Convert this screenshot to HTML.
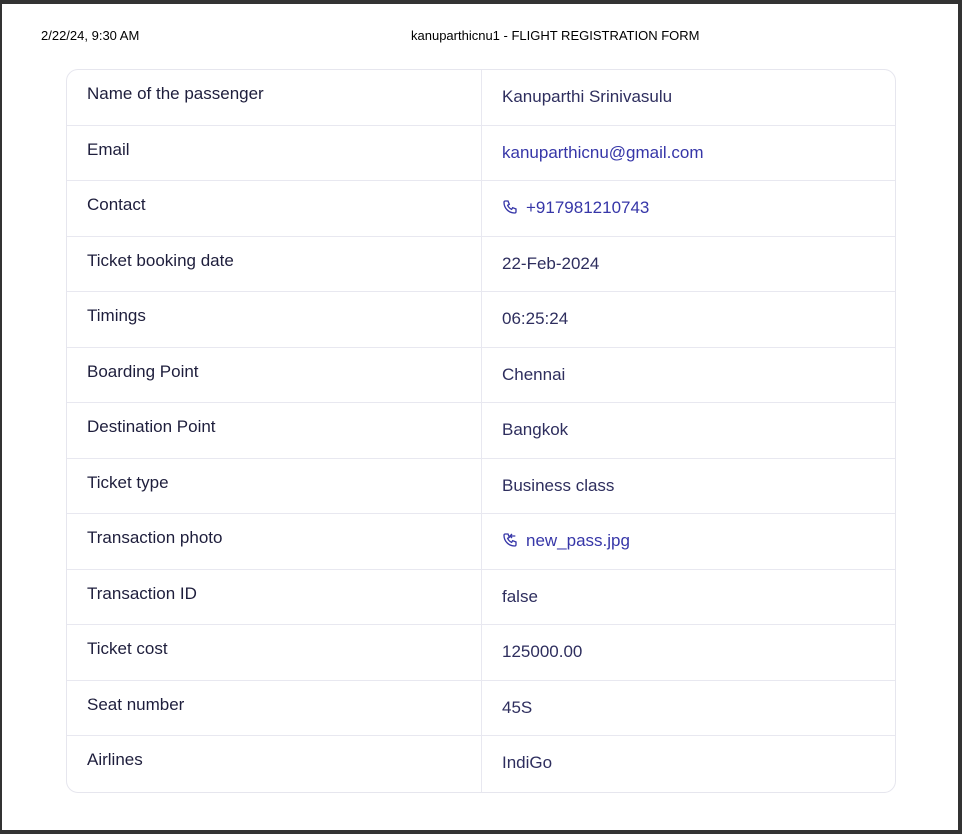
<!DOCTYPE html>
<html><head><style>
html,body{margin:0;padding:0}
body{width:962px;height:834px;background:#333;position:relative;overflow:hidden;font-family:"Liberation Sans",sans-serif}
.page{position:absolute;left:2px;top:4px;width:956px;height:826px;background:#fff}
.hd{position:absolute;top:24px;font-size:13px;color:#000}
table{position:absolute;left:64px;top:65px;width:830px;border-collapse:separate;border-spacing:0;border:1px solid #e6e6ee;border-radius:12px}
td{height:55.5px;border-bottom:1.5px solid #e8e8f0;padding:0 20px;font-size:17px;vertical-align:top;box-sizing:border-box}
tr:last-child td{border-bottom:none}
td.l{width:415px;border-right:1.5px solid #e8e8f0;color:#1e1e3c;padding-top:14px}
td.v{color:#2e2e5e;padding-top:17px}
td.v.b{color:#3636a8}
svg{vertical-align:-2px;margin-right:8px}
</style></head><body><div class="page">
<div class="hd" style="left:39px">2/22/24, 9:30 AM</div>
<div class="hd" style="left:409px">kanuparthicnu1 - FLIGHT REGISTRATION FORM</div>
<table>
<tr><td class="l">Name of the passenger</td><td class="v">Kanuparthi Srinivasulu</td></tr>
<tr><td class="l">Email</td><td class="v b">kanuparthicnu@gmail.com</td></tr>
<tr><td class="l">Contact</td><td class="v b"><svg width="16" height="16" viewBox="0 0 24 24" fill="none" stroke="#3636a8" stroke-width="2"><path d="M5 3h4l2 5-2.5 1.5a11 11 0 0 0 6 6L16 13l5 2v4a2 2 0 0 1-2 2A16 16 0 0 1 3 5a2 2 0 0 1 2-2"/></svg>+917981210743</td></tr>
<tr><td class="l">Ticket booking date</td><td class="v">22-Feb-2024</td></tr>
<tr><td class="l">Timings</td><td class="v">06:25:24</td></tr>
<tr><td class="l">Boarding Point</td><td class="v">Chennai</td></tr>
<tr><td class="l">Destination Point</td><td class="v">Bangkok</td></tr>
<tr><td class="l">Ticket type</td><td class="v">Business class</td></tr>
<tr><td class="l">Transaction photo</td><td class="v b"><svg width="16" height="16" viewBox="0 0 24 24" fill="none" stroke="#3636a8" stroke-width="2"><path d="M5 3h4l2 5-2.5 1.5a11 11 0 0 0 6 6L16 13l5 2v4a2 2 0 0 1-2 2A16 16 0 0 1 3 5a2 2 0 0 1 2-2"/><path d="M15 3l-3 3 3 3M12 6h8"/></svg>new_pass.jpg</td></tr>
<tr><td class="l">Transaction ID</td><td class="v">false</td></tr>
<tr><td class="l">Ticket cost</td><td class="v">125000.00</td></tr>
<tr><td class="l">Seat number</td><td class="v">45S</td></tr>
<tr><td class="l">Airlines</td><td class="v">IndiGo</td></tr>
</table>
</div></body></html>
